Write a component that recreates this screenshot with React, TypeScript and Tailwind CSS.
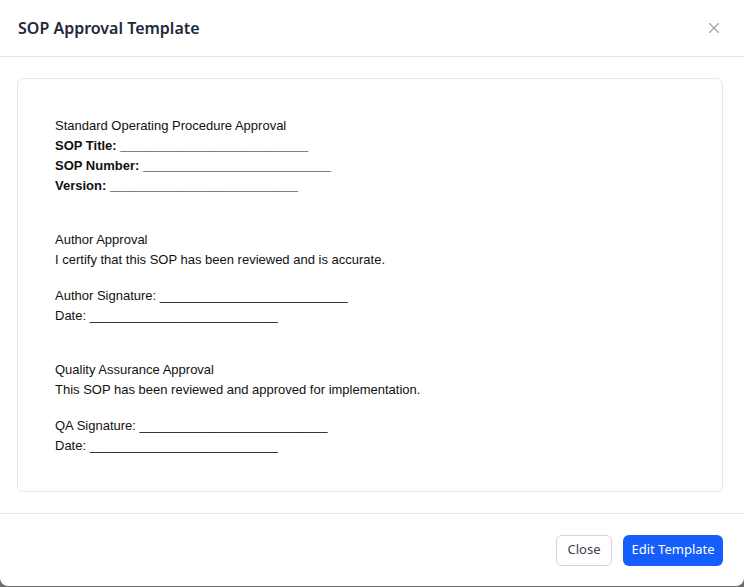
import React from 'react';
import { X } from 'lucide-react';

const blank = '__________________________';

const ui = { fontFamily: '"Noto Sans", "Open Sans", sans-serif' };
const doc = { fontFamily: '"Liberation Sans", Arial, sans-serif' };

export default function App() {
  return (
    <div className="h-[587px] w-[744px] bg-[#6b6b6b] overflow-hidden">
      <div className="h-[586px] w-full bg-white rounded-b-lg flex flex-col" style={ui}>
        {/* Header */}
        <div className="h-[57px] shrink-0 border-b border-gray-200 flex items-center justify-between pl-[18px] pr-[21px]">
          <h2 className="text-[16px] font-semibold text-gray-800">SOP Approval Template</h2>
          <button className="text-gray-400">
            <X size={18} strokeWidth={1.5} />
          </button>
        </div>

        {/* Body */}
        <div className="flex-1 pl-[17px] pr-[21px] pt-[21px] pb-[21px]">
          <div className="h-full border border-gray-200 rounded-md px-[37px] pt-[37px] pb-[35px] text-[13px] leading-[20px] text-[#111]" style={doc}>
            <p>Standard Operating Procedure Approval</p>
            <p className="font-bold">SOP Title: {blank}</p>
            <p className="font-bold">SOP Number: {blank}</p>
            <p className="font-bold">Version: {blank}</p>

            <div className="mt-[34px]">
              <p>Author Approval</p>
              <p>I certify that this SOP has been reviewed and is accurate.</p>
              <p className="mt-[16px]">Author Signature: {blank}</p>
              <p>Date: {blank}</p>
            </div>

            <div className="mt-[34px]">
              <p>Quality Assurance Approval</p>
              <p>This SOP has been reviewed and approved for implementation.</p>
              <p className="mt-[16px]">QA Signature: {blank}</p>
              <p>Date: {blank}</p>
            </div>
          </div>
        </div>

        {/* Footer */}
        <div className="h-[73px] shrink-0 border-t border-gray-200 flex items-center justify-end gap-[11px] pr-[21px]">
          <button className="h-[31px] w-[56px] rounded-md border border-gray-300 bg-white text-[13px] text-gray-700">
            Close
          </button>
          <button className="h-[31px] w-[100px] rounded-md bg-blue-600 text-[13px] text-white">
            Edit Template
          </button>
        </div>
      </div>
    </div>
  );
}
